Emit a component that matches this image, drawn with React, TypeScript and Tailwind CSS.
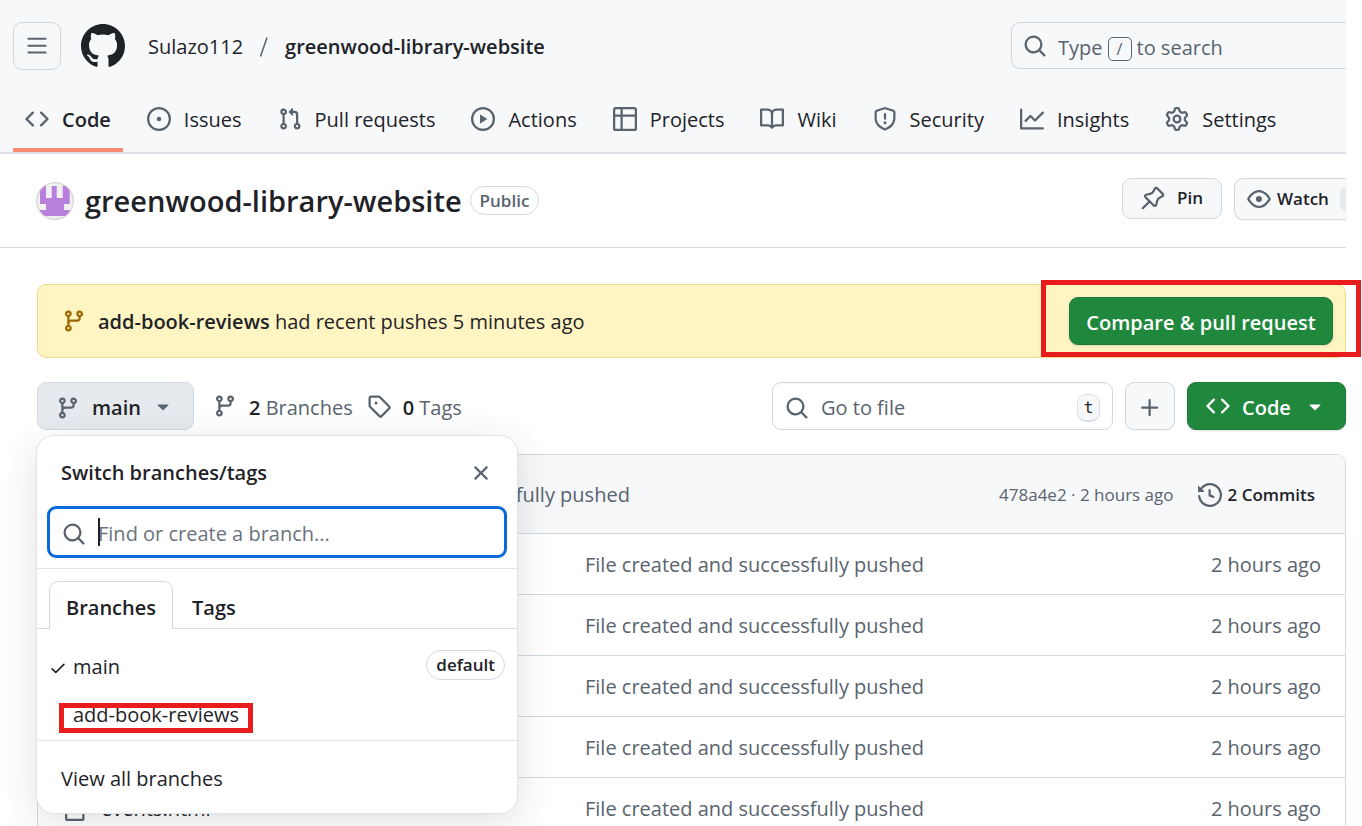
import type { ReactNode } from "react";

const PATHS = {
  bars: "M1 2.75A.75.75 0 0 1 1.75 2h12.5a.75.75 0 0 1 0 1.5H1.75A.75.75 0 0 1 1 2.75Zm0 5A.75.75 0 0 1 1.75 7h12.5a.75.75 0 0 1 0 1.5H1.75A.75.75 0 0 1 1 7.75ZM1.75 12h12.5a.75.75 0 0 1 0 1.5H1.75a.75.75 0 0 1 0-1.5Z",
  github:
    "M8 0c4.42 0 8 3.58 8 8a8.013 8.013 0 0 1-5.45 7.59c-.4.08-.55-.17-.55-.38 0-.27.01-1.13.01-2.2 0-.75-.25-1.23-.54-1.48 1.78-.2 3.65-.88 3.65-3.95 0-.88-.31-1.59-.82-2.15.08-.2.36-1.02-.08-2.12 0 0-.67-.22-2.2.82-.64-.18-1.32-.27-2-.27-.68 0-1.36.09-2 .27-1.53-1.03-2.2-.82-2.2-.82-.44 1.1-.16 1.92-.08 2.12-.51.56-.82 1.28-.82 2.15 0 3.06 1.86 3.75 3.64 3.95-.23.2-.44.55-.51 1.07-.46.21-1.61.55-2.33-.66-.15-.24-.6-.83-1.23-.82-.67.01-.27.38.01.53.34.19.73.9.82 1.13.16.45.68 1.31 2.69.94 0 .67.01 1.3.01 1.49 0 .21-.15.45-.55.38A7.995 7.995 0 0 1 0 8c0-4.42 3.58-8 8-8Z",
  code: "m11.28 3.22 4.25 4.25a.75.75 0 0 1 0 1.06l-4.25 4.25a.749.749 0 0 1-1.275-.326.749.749 0 0 1 .215-.734L13.94 8l-3.72-3.72a.749.749 0 0 1 .326-1.275.749.749 0 0 1 .734.215Zm-6.56 0a.751.751 0 0 1 1.042.018.751.751 0 0 1 .018 1.042L2.06 8l3.72 3.72a.749.749 0 0 1-.326 1.275.749.749 0 0 1-.734-.215L.47 8.53a.75.75 0 0 1 0-1.06Z",
  issue:
    "M8 9.5a1.5 1.5 0 1 0 0-3 1.5 1.5 0 0 0 0 3ZM8 0a8 8 0 1 1 0 16A8 8 0 0 1 8 0ZM1.5 8a6.5 6.5 0 1 0 13 0 6.5 6.5 0 0 0-13 0Z",
  pull: "M1.5 3.25a2.25 2.25 0 1 1 3 2.122v5.256a2.251 2.251 0 1 1-1.5 0V5.372A2.25 2.25 0 0 1 1.5 3.25Zm5.677-.177L9.573.677A.25.25 0 0 1 10 .854V2.5h1A2.5 2.5 0 0 1 13.5 5v5.628a2.251 2.251 0 1 1-1.5 0V5a1 1 0 0 0-1-1h-1v1.646a.25.25 0 0 1-.427.177L7.177 3.427a.25.25 0 0 1 0-.354ZM3.75 2.5a.75.75 0 1 0 0 1.5.75.75 0 0 0 0-1.5Zm0 9.5a.75.75 0 1 0 0 1.5.75.75 0 0 0 0-1.5Zm8.25.75a.75.75 0 1 0 1.5 0 .75.75 0 0 0-1.5 0Z",
  play: "M8 0a8 8 0 1 1 0 16A8 8 0 0 1 8 0ZM1.5 8a6.5 6.5 0 1 0 13 0 6.5 6.5 0 0 0-13 0Zm4.879-2.773 4.264 2.559a.25.25 0 0 1 0 .428l-4.264 2.559A.25.25 0 0 1 6 10.559V5.442a.25.25 0 0 1 .379-.215Z",
  table:
    "M0 1.75C0 .784.784 0 1.75 0h12.5C15.216 0 16 .784 16 1.75v12.5A1.75 1.75 0 0 1 14.25 16H1.75A1.75 1.75 0 0 1 0 14.25ZM6.5 6.5v8h7.75a.25.25 0 0 0 .25-.25V6.5Zm8-1.5V1.75a.25.25 0 0 0-.25-.25H6.5V5Zm-13 1.5v7.75c0 .138.112.25.25.25H5v-8ZM5 5V1.5H1.75a.25.25 0 0 0-.25.25V5Z",
  book: "M0 1.75A.75.75 0 0 1 .75 1h4.253c1.227 0 2.317.59 3 1.501A3.743 3.743 0 0 1 11.006 1h4.245a.75.75 0 0 1 .75.75v10.5a.75.75 0 0 1-.75.75h-4.507a2.25 2.25 0 0 0-1.591.659l-.622.621a.75.75 0 0 1-1.06 0l-.622-.621A2.25 2.25 0 0 0 5.258 13H.75a.75.75 0 0 1-.75-.75Zm7.251 10.324.004-5.073-.002-2.253A2.25 2.25 0 0 0 5.003 2.5H1.5v9h3.757a3.75 3.75 0 0 1 1.994.574ZM8.755 4.75l-.004 7.322a3.752 3.752 0 0 1 1.992-.572H14.5v-9h-3.495a2.25 2.25 0 0 0-2.25 2.25Z",
  shield:
    "M7.467.133a1.748 1.748 0 0 1 1.066 0l5.25 1.68A1.75 1.75 0 0 1 15 3.48V7c0 1.566-.32 3.182-1.303 4.682-.983 1.498-2.585 2.813-5.032 3.855a1.697 1.697 0 0 1-1.33 0c-2.447-1.042-4.049-2.357-5.032-3.855C1.32 10.182 1 8.566 1 7V3.48a1.75 1.75 0 0 1 1.217-1.667Zm.61 1.429a.25.25 0 0 0-.153 0l-5.25 1.68a.25.25 0 0 0-.174.238V7c0 1.358.275 2.666 1.057 3.86.784 1.194 2.121 2.34 4.366 3.297a.196.196 0 0 0 .154 0c2.245-.956 3.582-2.104 4.366-3.298C13.225 9.666 13.5 8.36 13.5 7V3.48a.251.251 0 0 0-.174-.237l-5.25-1.68ZM8.75 4.75v3a.75.75 0 0 1-1.5 0v-3a.75.75 0 0 1 1.5 0ZM9 10.5a1 1 0 1 1-2 0 1 1 0 0 1 2 0Z",
  graph:
    "M1.5 1.75V13.5h13.75a.75.75 0 0 1 0 1.5H.75a.75.75 0 0 1-.75-.75V1.75a.75.75 0 0 1 1.5 0Zm14.28 2.53-5.25 5.25a.75.75 0 0 1-1.06 0L7 7.06 4.28 9.78a.751.751 0 0 1-1.042-.018.751.751 0 0 1-.018-1.042l3.25-3.25a.75.75 0 0 1 1.06 0L10 7.94l4.72-4.72a.751.751 0 0 1 1.042.018.751.751 0 0 1 .018 1.042Z",
  gear: "M8 0a8.2 8.2 0 0 1 .701.031C9.444.095 9.99.645 10.16 1.29l.288 1.107c.018.066.079.158.212.224.231.114.454.243.668.386.123.082.233.09.299.071l1.103-.303c.644-.176 1.392.021 1.82.63.27.385.506.792.704 1.218.315.675.111 1.422-.364 1.891l-.814.806c-.049.048-.098.147-.088.294.016.257.016.515 0 .772-.01.147.038.246.088.294l.814.806c.475.469.679 1.216.364 1.891a7.977 7.977 0 0 1-.704 1.217c-.428.61-1.176.807-1.82.63l-1.102-.302c-.067-.019-.177-.011-.3.071a5.909 5.909 0 0 1-.668.386c-.133.066-.194.158-.211.224l-.29 1.106c-.168.646-.715 1.196-1.458 1.26a8.006 8.006 0 0 1-1.402 0c-.743-.064-1.289-.614-1.458-1.26l-.289-1.106c-.018-.066-.079-.158-.212-.224a5.738 5.738 0 0 1-.668-.386c-.123-.082-.233-.09-.299-.071l-1.103.303c-.644.176-1.392-.021-1.82-.63a8.12 8.12 0 0 1-.704-1.218c-.315-.675-.111-1.422.363-1.891l.815-.806c.05-.048.098-.147.088-.294a6.214 6.214 0 0 1 0-.772c.01-.147-.038-.246-.088-.294l-.815-.806C.635 6.045.431 5.298.746 4.623a7.92 7.92 0 0 1 .704-1.217c.428-.61 1.176-.807 1.82-.63l1.102.302c.067.019.177.011.3-.071.214-.143.437-.272.668-.386.133-.066.194-.158.211-.224l.29-1.106C6.009.645 6.556.095 7.299.03 7.53.01 7.764 0 8 0Zm-.571 1.525c-.036.003-.108.036-.137.146l-.289 1.105c-.147.561-.549.967-.998 1.189-.173.086-.34.183-.5.29-.417.278-.97.423-1.529.27l-1.103-.303c-.109-.03-.175.016-.195.045-.22.312-.412.644-.573.99-.014.031-.021.11.059.19l.815.806c.411.406.562.957.53 1.456a4.709 4.709 0 0 0 0 .582c.032.499-.119 1.05-.53 1.456l-.815.806c-.081.08-.073.159-.059.19.162.346.353.677.573.989.02.03.085.076.195.046l1.102-.303c.56-.153 1.113-.008 1.53.27.161.107.328.204.501.29.447.222.85.629.997 1.189l.289 1.105c.029.109.101.143.137.146a6.6 6.6 0 0 0 1.142 0c.036-.003.108-.036.137-.146l.289-1.105c.147-.561.549-.967.998-1.189.173-.086.34-.183.5-.29.417-.278.97-.423 1.529-.27l1.103.303c.109.029.175-.016.195-.045.22-.313.411-.644.573-.99.014-.031.021-.11-.059-.19l-.815-.806c-.411-.406-.562-.957-.53-1.456a4.709 4.709 0 0 0 0-.582c-.032-.499.119-1.05.53-1.456l.815-.806c.081-.08.073-.159.059-.19a6.464 6.464 0 0 0-.573-.989c-.02-.03-.085-.076-.195-.046l-1.102.303c-.56.153-1.113.008-1.53-.27a4.44 4.44 0 0 0-.501-.29c-.447-.222-.85-.629-.997-1.189l-.289-1.105c-.029-.11-.101-.143-.137-.146a6.6 6.6 0 0 0-1.142 0ZM11 8a3 3 0 1 1-6 0 3 3 0 0 1 6 0ZM9.5 8a1.5 1.5 0 1 0-3.001.001A1.5 1.5 0 0 0 9.5 8Z",
  pin: "m11.294.984 3.722 3.722a1.75 1.75 0 0 1-.504 2.826l-1.327.613a3.089 3.089 0 0 0-1.707 2.084l-.584 2.454c-.317 1.332-1.972 1.8-2.94.832L5.75 11.311 1.78 15.28a.749.749 0 1 1-1.06-1.06l3.969-3.97-2.204-2.204c-.968-.968-.5-2.623.832-2.94l2.454-.584a3.08 3.08 0 0 0 2.084-1.707l.613-1.327a1.75 1.75 0 0 1 2.826-.504ZM6.283 9.723l2.732 2.731a.25.25 0 0 0 .42-.119l.584-2.454a4.586 4.586 0 0 1 2.537-3.098l1.328-.613a.25.25 0 0 0 .072-.404l-3.722-3.722a.25.25 0 0 0-.404.072l-.613 1.328a4.584 4.584 0 0 1-3.098 2.537l-2.454.584a.25.25 0 0 0-.119.42l2.731 2.732Z",
  eye: "M8 2c1.981 0 3.671.992 4.933 2.078 1.27 1.091 2.187 2.345 2.637 3.023a1.62 1.62 0 0 1 0 1.798c-.45.678-1.367 1.932-2.637 3.023C11.67 13.008 9.981 14 8 14c-1.981 0-3.671-.992-4.933-2.078C1.797 10.83.88 9.576.43 8.898a1.62 1.62 0 0 1 0-1.798c.45-.677 1.367-1.931 2.637-3.022C4.33 2.992 6.019 2 8 2ZM1.679 7.932a.12.12 0 0 0 0 .136c.411.622 1.241 1.75 2.366 2.717C5.176 11.758 6.527 12.5 8 12.5c1.473 0 2.825-.742 3.955-1.715 1.124-.967 1.954-2.096 2.366-2.717a.12.12 0 0 0 0-.136c-.412-.621-1.242-1.75-2.366-2.717C10.824 4.242 9.473 3.5 8 3.5c-1.473 0-2.825.742-3.955 1.715-1.124.967-1.954 2.096-2.366 2.717ZM8 10a2 2 0 1 1-.001-3.999A2 2 0 0 1 8 10Z",
  branch:
    "M9.5 3.25a2.25 2.25 0 1 1 3 2.122V6A2.5 2.5 0 0 1 10 8.5H6a1 1 0 0 0-1 1v1.128a2.251 2.251 0 1 1-1.5 0V5.372a2.25 2.25 0 1 1 1.5 0v1.836A2.493 2.493 0 0 1 6 7h4a1 1 0 0 0 1-1v-.628A2.25 2.25 0 0 1 9.5 3.25Zm-6 0a.75.75 0 1 0 1.5 0 .75.75 0 0 0-1.5 0Zm8.25-.75a.75.75 0 1 0 0 1.5.75.75 0 0 0 0-1.5ZM4.25 12a.75.75 0 1 0 0 1.5.75.75 0 0 0 0-1.5Z",
  tag: "M1 7.775V2.75C1 1.784 1.784 1 2.75 1h5.025c.464 0 .91.184 1.238.513l6.25 6.25a1.75 1.75 0 0 1 0 2.474l-5.026 5.026a1.75 1.75 0 0 1-2.474 0l-6.25-6.25A1.752 1.752 0 0 1 1 7.775Zm1.5 0c0 .066.026.13.073.177l6.25 6.25a.25.25 0 0 0 .354 0l5.025-5.025a.25.25 0 0 0 0-.354l-6.25-6.25a.25.25 0 0 0-.177-.073H2.75a.25.25 0 0 0-.25.25ZM6 5a1 1 0 1 1 0 2 1 1 0 0 1 0-2Z",
  search:
    "M10.68 11.74a6 6 0 0 1-7.922-8.982 6 6 0 0 1 8.982 7.922l3.04 3.04a.749.749 0 0 1-.326 1.275.749.749 0 0 1-.734-.215ZM11.5 7a4.499 4.499 0 1 0-8.997 0A4.499 4.499 0 0 0 11.5 7Z",
  plus: "M7.75 2a.75.75 0 0 1 .75.75V7h4.25a.75.75 0 0 1 0 1.5H8.5v4.25a.75.75 0 0 1-1.5 0V8.5H2.75a.75.75 0 0 1 0-1.5H7V2.75A.75.75 0 0 1 7.75 2Z",
  caret:
    "m4.427 7.427 3.396 3.396a.25.25 0 0 0 .354 0l3.396-3.396A.25.25 0 0 0 11.396 7H4.604a.25.25 0 0 0-.177.427Z",
  history:
    "m.427 1.927 1.215 1.215a8.002 8.002 0 1 1-1.6 5.685.75.75 0 1 1 1.493-.154 6.5 6.5 0 1 0 1.18-4.458l1.358 1.358A.25.25 0 0 1 3.896 6H.25A.25.25 0 0 1 0 5.75V2.104a.25.25 0 0 1 .427-.177ZM7.75 4a.75.75 0 0 1 .75.75v2.992l2.028.812a.75.75 0 0 1-.557 1.392l-2.5-1A.751.751 0 0 1 7 8.25v-3.5A.75.75 0 0 1 7.75 4Z",
  x: "M3.72 3.72a.75.75 0 0 1 1.06 0L8 6.94l3.22-3.22a.749.749 0 0 1 1.275.326.749.749 0 0 1-.215.734L9.06 8l3.22 3.22a.749.749 0 0 1-.326 1.275.749.749 0 0 1-.734-.215L8 9.06l-3.22 3.22a.751.751 0 0 1-1.042-.018.751.751 0 0 1-.018-1.042L6.94 8 3.72 4.78a.75.75 0 0 1 0-1.06Z",
  check:
    "M13.78 4.22a.75.75 0 0 1 0 1.06l-7.25 7.25a.75.75 0 0 1-1.06 0L2.22 9.28a.751.751 0 0 1 .018-1.042.751.751 0 0 1 1.042-.018L6 10.94l6.72-6.72a.75.75 0 0 1 1.06 0Z",
  file: "M2 1.75C2 .784 2.784 0 3.75 0h6.586c.464 0 .909.184 1.237.513l2.914 2.914c.329.328.513.773.513 1.237v9.586A1.75 1.75 0 0 1 13.25 16h-9.5A1.75 1.75 0 0 1 2 14.25Zm1.75-.25a.25.25 0 0 0-.25.25v12.5c0 .138.112.25.25.25h9.5a.25.25 0 0 0 .25-.25V6h-2.75A1.75 1.75 0 0 1 9 4.25V1.5Zm6.75.062V4.25c0 .138.112.25.25.25h2.688l-.011-.013-2.914-2.914-.013-.011Z",
};

type IconName = keyof typeof PATHS;

function Icon({ name, className = "size-6 text-[#59636e]" }: { name: IconName; className?: string }) {
  return (
    <svg viewBox="0 0 16 16" fill="currentColor" aria-hidden="true" className={`shrink-0 ${className}`}>
      <path d={PATHS[name]} />
    </svg>
  );
}

const TABS: { icon: IconName; label: string }[] = [
  { icon: "code", label: "Code" },
  { icon: "issue", label: "Issues" },
  { icon: "pull", label: "Pull requests" },
  { icon: "play", label: "Actions" },
  { icon: "table", label: "Projects" },
  { icon: "book", label: "Wiki" },
  { icon: "shield", label: "Security" },
  { icon: "graph", label: "Insights" },
  { icon: "gear", label: "Settings" },
];

const FILES: { name?: string; message: string; date: string }[] = [
  { message: "File created and successfully pushed", date: "2 hours ago" },
  { message: "File created and successfully pushed", date: "2 hours ago" },
  { message: "File created and successfully pushed", date: "2 hours ago" },
  { message: "File created and successfully pushed", date: "2 hours ago" },
  { name: "events.html", message: "File created and successfully pushed", date: "2 hours ago" },
];

function Pill({ children, className }: { children: ReactNode; className: string }) {
  return (
    <span
      className={`flex items-center rounded-full border border-[#d1d9e0] px-[9px] text-[17px] font-semibold ${className}`}
    >
      {children}
    </span>
  );
}

function Header() {
  return (
    <header className="border-b-2 border-[#d9dfe5] bg-[#f6f8fa] pt-[22px]">
      <div className="flex items-center pl-[13px]">
        <button
          type="button"
          aria-label="Open menu"
          className="flex size-12 items-center justify-center rounded-[9px] border border-[#d1d9e0]"
        >
          <Icon name="bars" className="h-6 w-[22px] text-[#59636e]" />
        </button>
        <a href="#home" aria-label="GitHub" className="ml-5">
          <Icon name="github" className="size-11 text-[#1f2328]" />
        </a>
        <nav aria-label="Breadcrumb" className="ml-[23px] flex items-center pt-0.5">
          <a href="#owner">Sulazo112</a>
          <svg viewBox="0 0 10 22" aria-hidden="true" className="mx-4 h-[22px] w-2.5">
            <path d="M1.5 20.5 8 1.5" stroke="#59636e" strokeWidth="1.5" />
          </svg>
          <a href="#repo" className="font-semibold">
            greenwood-library-website
          </a>
        </nav>
        <button
          type="button"
          className="ml-auto flex h-[47px] w-[335px] items-center self-start rounded-l-[9px] border border-r-0 border-[#d1d9e0] pl-[11px] text-[#59636e]"
        >
          <Icon name="search" />
          <span className="ml-[11px] flex items-center pt-1">
            Type
            <kbd className="mx-[5px] mt-0.5 flex size-6 items-center justify-center rounded-[5px] border border-[#59636e] font-[inherit] text-base">
              /
            </kbd>
            to search
          </span>
        </button>
      </div>
      <nav aria-label="Repository" className="mt-4 flex gap-3 pl-[13px]">
        {TABS.map((tab, i) => (
          <a
            key={tab.label}
            href={`#${tab.label}`}
            className={`flex h-[66px] items-center gap-[13px] px-3 pb-1.5 pt-2.5 ${
              i === 0 ? "border-b-4 border-[#fd8c73] font-semibold" : "border-b-4 border-transparent"
            }`}
          >
            <Icon name={tab.icon} />
            <span className="pt-0.5">{tab.label}</span>
          </a>
        ))}
      </nav>
    </header>
  );
}

function Avatar() {
  return (
    <svg viewBox="0 0 38 38" aria-hidden="true" className="size-[38px] shrink-0">
      <defs>
        <clipPath id="avatar-clip">
          <circle cx="19" cy="19" r="18" />
        </clipPath>
      </defs>
      <circle cx="19" cy="19" r="18.3" fill="#f0f0f0" stroke="#d8d8d8" strokeWidth="1.3" />
      <path
        clipPath="url(#avatar-clip)"
        d="M4 4h6v12h5.700V4h5v12h6V4h7v18H28v6h5.700v6H4v-6h6v-6H4Z"
        fill="#b87fdb"
      />
    </svg>
  );
}

function TitleBar() {
  return (
    <div className="flex h-[94px] items-center border-b border-[#d1d9e0] pl-9">
      <Avatar />
      <h1 className="ml-[11px] text-[29px] font-semibold">greenwood-library-website</h1>
      <Pill className="ml-2 h-[29px] text-[#59636e]">Public</Pill>
      <div className="mb-1 ml-auto flex text-[17px] font-semibold">
        <button
          type="button"
          className="flex h-[41px] w-[100px] items-center justify-center gap-3 rounded-[9px] border border-[#d1d9e0] bg-[#f6f8fa]"
        >
          <Icon name="pin" />
          Pin
        </button>
        <button
          type="button"
          className="ml-3 flex h-[42px] w-28 items-center overflow-hidden rounded-l-[9px] border border-r-0 border-[#d1d9e0] bg-[#f6f8fa] pl-3 shadow-xs"
        >
          <Icon name="eye" />
          <span className="ml-1.5">Watch</span>
          <span className="ml-auto h-6 w-1.5 rounded-l-full bg-[#e6eaef]" />
        </button>
      </div>
    </div>
  );
}

function PushBanner() {
  return (
    <div className="flex h-[74px] items-center rounded-[9px] border border-[#f0d98c] bg-[#fff5c2] pl-6 pr-3">
      <Icon name="branch" className="size-6 text-[#9a6700]" />
      <p className="ml-3 pt-0.5">
        <span className="font-semibold">add-book-reviews</span> had recent pushes 5 minutes ago
      </p>
      <div className="relative ml-auto">
        <button
          type="button"
          className="flex h-12 w-[264px] items-center justify-center rounded-[9px] border border-[#1f7a38] bg-[#1f883d] pt-1 font-semibold text-white shadow-sm"
        >
          Compare &amp; pull request
        </button>
        <span className="pointer-events-none absolute -bottom-3 -left-7 -right-7 -top-[17px] border-[5px] border-[#e81c1c]" />
      </div>
    </div>
  );
}

function BranchMenu() {
  return (
    <div
      role="dialog"
      aria-label="Switch branches/tags"
      className="absolute -left-px top-[53px] z-10 w-[482px] rounded-[18px] border border-[#dfe4e9] bg-white shadow-[0_9px_36px_rgba(37,41,46,0.14)]"
    >
      <div className="flex h-[70px] items-center justify-between px-6 pt-1">
        <h2 className="font-semibold">Switch branches/tags</h2>
        <button type="button" aria-label="Close">
          <Icon name="x" />
        </button>
      </div>
      <div className="border-b border-[#dfe4e9] px-2.5 pb-2.5">
        <label className="relative flex h-[52px] items-center gap-3 rounded-[9px] border-[3px] border-[#0969da] pl-3 pt-1">
          <Icon name="search" />
          <input
            type="text"
            aria-label="Find or create a branch"
            placeholder="Find or create a branch..."
            className="w-full bg-transparent outline-none placeholder:text-[#6a737d]"
          />
          <span className="absolute left-12 top-[9px] h-7 w-0.5 bg-[#1f2328]" />
        </label>
      </div>
      <div role="tablist" className="flex h-[60px] items-end border-b border-[#d9dfe5] pl-3 font-semibold">
        <button
          type="button"
          role="tab"
          aria-selected="true"
          className="-mb-px h-12 w-[124px] rounded-t-[9px] border border-b-0 border-[#d1d9e0] bg-white pt-1"
        >
          Branches
        </button>
        <button type="button" role="tab" aria-selected="false" className="h-12 px-[19px] pt-2">
          Tags
        </button>
      </div>
      <ul className="h-28 border-b border-[#dfe4e9] pt-3">
        <li className="flex h-12 items-center px-3">
          <Icon name="check" className="mt-1.5 size-[18px] text-[#1f2328]" />
          <a href="#main" className="ml-1.5 pt-1">
            main
          </a>
          <Pill className="ml-auto h-[30px]">default</Pill>
        </li>
        <li className="flex h-12 items-center pl-9 pt-1">
          <div className="relative">
            <a href="#add-book-reviews">add-book-reviews</a>
            <span className="pointer-events-none absolute -bottom-1 -left-3.5 -right-3.5 top-0.5 border-[5px] border-[#e81c1c]" />
          </div>
        </li>
      </ul>
      <a href="#branches" className="flex h-[72px] items-center pl-6 pt-1">
        View all branches
      </a>
    </div>
  );
}

function Toolbar() {
  return (
    <div className="mt-6 flex h-12 items-center">
      <div className="relative">
        <button
          type="button"
          aria-expanded="true"
          className="flex h-12 w-[157px] items-center rounded-[9px] border border-[#d1d9e0] bg-[#e6eaef] pl-[18px] pt-1 font-semibold"
        >
          <Icon name="branch" />
          <span className="ml-3">main</span>
          <Icon name="caret" className="mb-1 ml-2.5 size-6 text-[#59636e]" />
        </button>
        <BranchMenu />
      </div>
      <a href="#branches" className="ml-[19px] flex items-center gap-3 text-[#59636e]">
        <Icon name="branch" />
        <span className="pt-1">
          <span className="font-semibold text-[#1f2328]">2</span> Branches
        </span>
      </a>
      <a href="#tags" className="ml-3.5 flex items-center gap-3 text-[#59636e]">
        <Icon name="tag" />
        <span className="pt-1">
          <span className="font-semibold text-[#1f2328]">0</span> Tags
        </span>
      </a>
      <label className="ml-auto flex h-12 w-[341px] items-center rounded-[9px] border border-[#d1d9e0] bg-white px-3 pt-1 shadow-[inset_0_1px_1px_rgba(31,35,40,0.04)]">
        <Icon name="search" />
        <input
          type="text"
          aria-label="Go to file"
          placeholder="Go to file"
          className="ml-3 w-full min-w-0 flex-1 bg-transparent outline-none placeholder:text-[#59636e]"
        />
        <kbd className="flex h-7 w-[23px] items-center justify-center rounded-[9px] border border-b-2 border-[#d9dfe5] bg-[#f6f8fa] font-['DejaVu_Sans_Mono',monospace] text-base">
          t
        </kbd>
      </label>
      <button
        type="button"
        aria-label="Add file"
        className="ml-3 flex h-12 w-[50px] items-center justify-center rounded-[9px] border border-[#d1d9e0] bg-[#f6f8fa] pt-1 shadow-xs"
      >
        <Icon name="plus" />
      </button>
      <button
        type="button"
        className="ml-3 flex h-12 w-[159px] items-center rounded-[9px] border border-[#1f7a38] bg-[#1f883d] pl-[18px] font-semibold text-white shadow-sm"
      >
        <Icon name="code" className="size-6 text-white" />
        <span className="ml-3 pt-1">Code</span>
        <Icon name="caret" className="ml-3 size-6 text-white" />
      </button>
    </div>
  );
}

function FileTable() {
  return (
    <div className="mt-6 rounded-t-[9px] border border-[#d1d9e0]">
      <table className="w-full border-collapse text-[#59636e]">
        <thead>
          <tr>
            <th colSpan={3} className="h-[78px] rounded-t-[8px] border-b border-[#d1d9e0] bg-[#f6f8fa] p-0 font-normal">
              <div className="flex items-center pl-[253px] pr-[30px] pt-0.5">
                <span>File created and successfully pushed</span>
                <span className="ml-auto text-[17px]">478a4e2 · 2 hours ago</span>
                <a href="#commits" className="ml-6 flex items-center gap-1.5 text-[17px] font-semibold text-[#1f2328]">
                  <Icon name="history" />2 Commits
                </a>
              </div>
            </th>
          </tr>
        </thead>
        <tbody>
          {FILES.map((file, i) => (
            <tr key={i} className="h-[61px] border-b border-[#d1d9e0]">
              <td className="w-[547px] pl-6 pt-0.5">
                {file.name && (
                  <a href="#file" className="flex items-center gap-[15px] text-[#1f2328]">
                    <Icon name="file" />
                    {file.name}
                  </a>
                )}
              </td>
              <td className="pt-0.5">{file.message}</td>
              <td className="pr-6 pt-0.5 text-right">{file.date}</td>
            </tr>
          ))}
        </tbody>
      </table>
    </div>
  );
}

export default function App() {
  return (
    <div className="h-screen overflow-hidden bg-white pr-4 font-['Open_Sans','Noto_Sans',sans-serif] text-xl leading-7 text-[#1f2328]">
      <Header />
      <TitleBar />
      <main className="pl-[37px] pt-9">
        <PushBanner />
        <Toolbar />
        <FileTable />
      </main>
    </div>
  );
}
